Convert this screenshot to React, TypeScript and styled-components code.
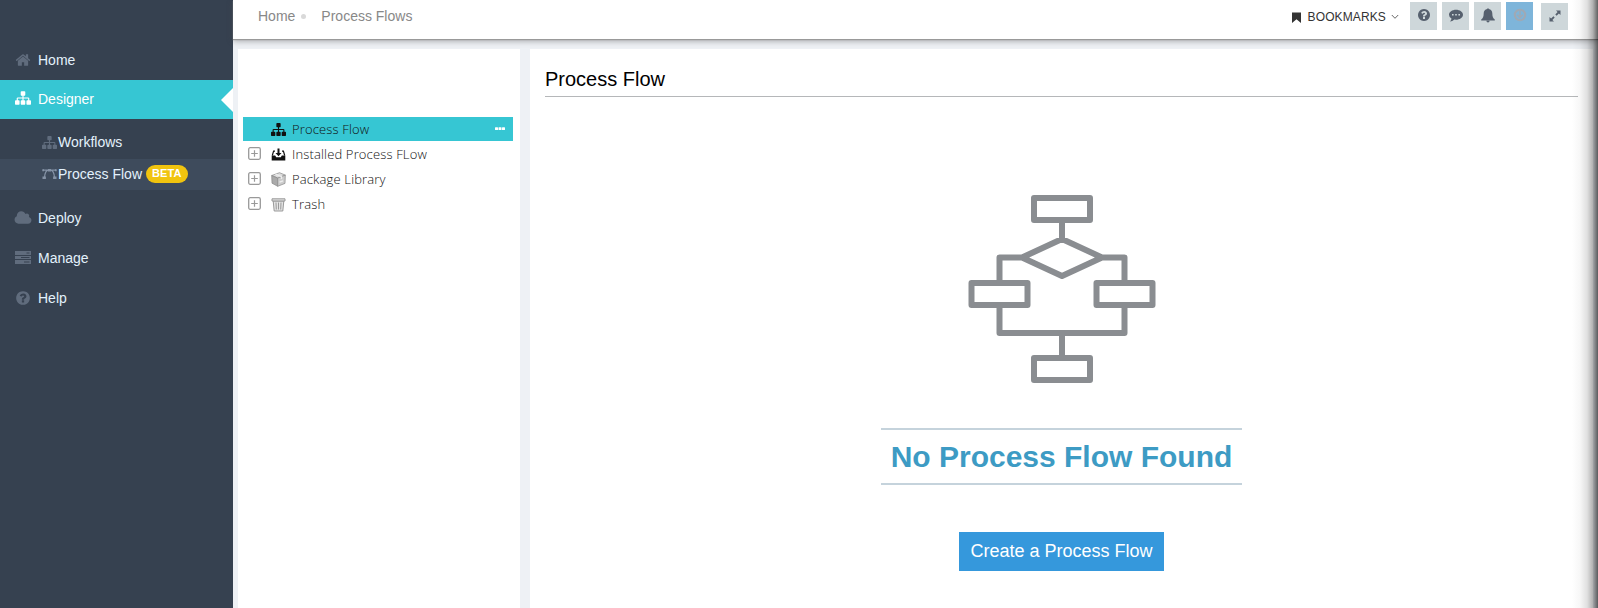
import React from "react";
import styled, { createGlobalStyle } from "styled-components";

const GlobalStyle = createGlobalStyle`
  * { box-sizing: border-box; }
  body {
    margin: 0;
    overflow: hidden;
    background: #eef1f5;
    font-family: "Liberation Sans", Arial, sans-serif;
    font-size: 14px;
  }
`;

const Shell = styled.div`
  position: relative;
  display: flex;
  height: 100vh;
`;

const Sidebar = styled.nav`
  width: 233px;
  flex: none;
  padding-top: 40px;
  background: #364150;
`;

const NavItem = styled.a<{ $active?: boolean }>`
  position: relative;
  display: flex;
  align-items: center;
  gap: 6px;
  height: ${(p) => (p.$active ? 39 : 40)}px;
  padding-left: 14px;
  padding-bottom: ${(p) => (p.$active ? 2 : 0)}px;
  background: ${(p) => (p.$active ? "#36c6d3" : "transparent")};
  color: ${(p) => (p.$active ? "#fff" : "#e3f1fc")};
  svg { color: ${(p) => (p.$active ? "#fff" : "#606c7d")}; }
`;

const ActiveArrow = styled.span`
  position: absolute;
  right: 0;
  top: 8px;
  border: solid transparent;
  border-width: 12px 12px 12px 0;
  border-right-color: #fff;
`;

const IconSlot = styled.span`
  display: flex;
  justify-content: center;
  width: 18px;
  margin-top: -1px;
`;

const SubMenu = styled.div`
  padding: 8px 0;
`;

const SubItem = styled.a<{ $current?: boolean }>`
  display: flex;
  align-items: center;
  height: ${(p) => (p.$current ? 31 : 32)}px;
  padding: 0 0 2px 42px;
  color: #e3f1fc;
  background: ${(p) => (p.$current ? "#3e4b5c" : "transparent")};
  svg {
    margin-right: 1px;
    color: ${(p) => (p.$current ? "#8492a5" : "#606c7d")};
  }
`;

const BetaBadge = styled.span`
  height: 18px;
  margin-left: 4px;
  padding: 0 6px;
  border-radius: 9px;
  background: #f1c40f;
  color: #fff;
  font-size: 11px;
  font-weight: 700;
  letter-spacing: 0.1px;
  line-height: 17px;
`;

const Main = styled.div`
  flex: 1;
  display: flex;
  flex-direction: column;
  min-width: 0;
`;

const Header = styled.header`
  position: relative;
  z-index: 1;
  display: flex;
  justify-content: space-between;
  height: 39px;
  flex: none;
  padding: 0 30px 0 25px;
  background: #fff;
  box-shadow: 0 1px 1px #999, 0 2px 6px rgba(70, 70, 70, 0.45);
`;

const Breadcrumb = styled.div`
  display: flex;
  align-items: center;
  height: 32px;
  color: #888;
`;

const Dot = styled.i`
  width: 5px;
  height: 5px;
  margin: 0 15px 0 6px;
  border-radius: 50%;
  background: #d9d9d9;
`;

const Tools = styled.div`
  display: flex;
  align-items: flex-start;
`;

const Bookmarks = styled.div`
  display: flex;
  align-items: center;
  height: 34px;
  margin-right: 6px;
  color: #333;
  font-size: 12px;
  letter-spacing: 0.12px;
`;

const BookmarkLabel = styled.span`
  margin: 0 5px 0 7px;
`;

const ToolButton = styled.button<{ $tint?: boolean; $last?: boolean }>`
  display: flex;
  align-items: center;
  justify-content: center;
  width: 27px;
  height: ${(p) => (p.$last ? 27 : 28)}px;
  margin: ${(p) => (p.$last ? "3px 0 0 8px" : "2px 0 0 5px")};
  padding: 0 0 2px;
  border: 0;
  background: ${(p) => (p.$tint ? "#7eb5da" : "#ced7da")};
  color: ${(p) => (p.$tint ? "#9fa9b5" : "#56606e")};
`;

const Panels = styled.div`
  flex: 1;
  display: flex;
  gap: 10px;
  padding: 10px 5px 0;
`;

const TreePanel = styled.aside`
  width: 282px;
  padding: 68px 7px 0 5px;
  background: #fff;
`;

const TreeRow = styled.div<{ $selected?: boolean }>`
  display: flex;
  align-items: center;
  height: 24px;
  margin-bottom: 1px;
  padding: 0 8px 0 5px;
  background: ${(p) => (p.$selected ? "#36c6d3" : "transparent")};
  color: #111;
  font-family: "Open Sans", sans-serif;
  font-size: 13px;
  font-weight: 300;
`;

const TreeLabel = styled.span`
  flex: 1;
  margin-left: 6px;
  letter-spacing: 0.15px;
`;

const Expander = styled.span`
  display: flex;
  width: 14px;
  margin-right: 9px;
`;

const Content = styled.main`
  flex: 1;
  padding: 0 15px;
  background: #fff;
`;

const Title = styled.h1`
  height: 48px;
  margin: 0;
  padding-top: 18px;
  border-bottom: 1px solid #b5b7b9;
  color: #000;
  font-size: 20px;
  font-weight: 400;
  line-height: 24px;
`;

const EmptyState = styled.section`
  display: flex;
  flex-direction: column;
  align-items: center;
  padding-top: 98px;
`;

const Message = styled.h2`
  width: 361px;
  height: 57px;
  margin: 45px 0 47px;
  border: solid #c5d3dc;
  border-width: 2px 0;
  color: #3d9bc4;
  font-size: 30px;
  line-height: 53px;
  text-align: center;
  white-space: nowrap;
`;

const CreateButton = styled.button`
  width: 205px;
  height: 39px;
  padding: 0;
  border: 0;
  background: #3598dc;
  color: #fff;
  font: 18px "Liberation Sans", Arial, sans-serif;
`;

const EdgeShadow = styled.div`
  position: absolute;
  z-index: 2;
  top: 0;
  right: 0;
  width: 26px;
  height: 100%;
  pointer-events: none;
  background: linear-gradient(to right, rgba(0,0,0,0), rgba(0,0,0,0.03) 30%, rgba(0,0,0,0.12) 58%, rgba(0,0,0,0.3) 80%, rgba(0,0,0,0.62));
`;

const paths = {
  home: "M1472 992v480q0 26-19 45t-45 19h-384v-384h-256v384h-384q-26 0-45-19t-19-45v-480q0-1 .5-3t.5-3l575-474 575 474q1 2 1 6zm223-69l-62 74q-8 9-21 11h-3q-13 0-21-7l-692-577-692 577q-12 8-24 7-13-2-21-11l-62-74q-8-10-7-23.5t11-21.5l719-599q32-26 76-26t76 26l244 204v-195q0-14 9-23t23-9h192q14 0 23 9t9 23v408l219 182q10 8 11 21.5t-7 23.5z",
  sitemap: "M1792 1248v320q0 40-28 68t-68 28h-320q-40 0-68-28t-28-68v-320q0-40 28-68t68-28h96v-192h-512v192h96q40 0 68 28t28 68v320q0 40-28 68t-68 28h-320q-40 0-68-28t-28-68v-320q0-40 28-68t68-28h96v-192h-512v192h96q40 0 68 28t28 68v320q0 40-28 68t-68 28h-320q-40 0-68-28t-28-68v-320q0-40 28-68t68-28h96v-192q0-52 38-90t90-38h512v-192h-96q-40 0-68-28t-28-68v-320q0-40 28-68t68-28h320q40 0 68 28t28 68v320q0 40-28 68t-68 28h-96v192h512q52 0 90 38t38 90v192h96q40 0 68 28t28 68z",
  question: "M1024 1376v-192q0-14-9-23t-23-9h-192q-14 0-23 9t-9 23v192q0 14 9 23t23 9h192q14 0 23-9t9-23zm256-672q0-88-55.5-163t-138.5-116-170-41q-243 0-371 213-15 24 8 42l132 100q7 6 19 6 16 0 25-12 53-68 86-92 34-24 86-24 48 0 85.5 26t37.5 59q0 38-20 61t-68 45q-63 28-115.5 86.5t-52.5 125.5v36q0 14 9 23t23 9h192q14 0 23-9t9-23q0-19 21.500-49.500t54.500-49.500q32-18 49-28.500t46-35 44.500-48 28-60.500 12.500-81zm384 192q0 209-103 385.500t-279.500 279.500-385.500 103-385.500-103-279.500-279.500-103-385.500 103-385.500 279.500-279.500 385.500-103 385.500 103 279.500 279.500 103 385.500z",
  cloud: "M1984 1152q0 159-112.5 271.5t-271.5 112.5h-1088q-185 0-316.5-131.5t-131.5-316.5q0-132 71-241.5t187-163.5q-2-28-2-43 0-212 150-362t362-150q158 0 286.5 88t187.5 230q70-62 166-62 106 0 181 75t75 181q0 75-41 138 129 30 213 134.5t84 239.5z",
};

const Glyph = ({ name, size = 16 }: { name: keyof typeof paths; size?: number }) => {
  const w = name === "cloud" ? 2048 : 1792;
  return (
    <svg width={(size * w) / 1792} height={size} viewBox={`0 0 ${w} 1792`} fill="currentColor">
      <path d={paths[name]} />
    </svg>
  );
};

const ServerIcon = () => (
  <svg width="16" height="14" viewBox="0 0 16 14">
    <path fill="currentColor" d="M0 0h16v4H0zM0 5h16v3H0zM0 9h16v4H0z" />
    <path stroke="#364150" strokeWidth="1" d="M11.500 2h3M6 6.500h8.500M9 11h5.500" />
  </svg>
);

const CurveIcon = () => (
  <svg width="15" height="12" viewBox="0 0 15 12" fill="none" stroke="currentColor">
    <path d="M2.500 9.500Q3 3 6 2.200H9Q12 3 12.500 9.500M1 2.200h13" strokeWidth="1.300" />
    <path d="M6 1h3v2.400H6zM.5 8.500h3.400v2.500H.5zM11.100 8.500h3.400v2.500h-3.400zM.3 1.200h1.700v2H.3zM13 1.200h1.700v2H13z" fill="currentColor" stroke="none" />
  </svg>
);

const BookmarkIcon = () => (
  <svg width="9" height="11" viewBox="0 0 9 11"><path fill="#333" d="M0 .5h9V11L4.500 7.200 0 11z" /></svg>
);

const Chevron = () => (
  <svg width="8" height="6" viewBox="0 0 8 6" fill="none" stroke="#666"><path d="M.8 1l3.200 3.300L7.200 1" /></svg>
);

const CommentIcon = () => (
  <svg width="14" height="13" viewBox="0 0 14 13">
    <path fill="currentColor" d="M7 .7c3.800 0 7 2.200 7 5s-3.200 5-7 5q-.8 0-1.600-.1Q3.400 12.400.9 12.500q1.600-1.300 1.600-2.900Q0 8.200 0 5.700c0-2.800 3.200-5 7-5z" />
    <path fill="#ced7da" d="M3 5h1.600v1.600H3zM6.200 5h1.600v1.600H6.200zM9.400 5H11v1.600H9.400z" />
  </svg>
);

const BellIcon = () => (
  <svg width="14" height="15" viewBox="0 0 14 15">
    <path fill="currentColor" d="M6.200 1a.8.8 0 0 1 1.600 0C10 1.500 11.300 3.200 11.300 5.200c0 3.300.8 5 2.500 6.300v.9H.2v-.9C1.900 10.200 2.700 8.500 2.700 5.200c0-2 1.300-3.700 3.500-4.200zM5.400 12.800h3.200a1.600 1.600 0 0 1-3.200 0z" />
  </svg>
);

const DownIcon = () => (
  <svg width="14" height="14" viewBox="0 0 14 14" fill="none" stroke="currentColor">
    <circle cx="7" cy="7" r="5.200" strokeWidth="2.100" />
    <path d="M7 3v6.500M4.200 6.800L7 9.600l2.800-2.800" strokeWidth="1.500" />
  </svg>
);

const ExpandIcon = () => (
  <svg width="12" height="12" viewBox="0 0 12 12">
    <path fill="currentColor" d="M7 .5h4.500V5L9.900 3.400 7.600 5.700l-1.300-1.300 2.300-2.300zM5 11.500H.5V7l1.600 1.600 2.300-2.300 1.300 1.300-2.300 2.300z" />
  </svg>
);

const PlusBox = () => (
  <svg width="14" height="14" viewBox="0 0 14 14" fill="none" stroke="#999">
    <rect x=".7" y=".7" width="11.600" height="11.600" rx="1.500" strokeWidth="1.300" />
    <path d="M6.500 3.200v6.600M3.200 6.500h6.600" strokeWidth="1.200" />
  </svg>
);

const InstallIcon = () => (
  <svg width="15" height="14" viewBox="0 0 15 14">
    <path fill="#111" d="M6.500 1.500h2v4.500h2L7.500 9.300 4.500 6h2z" />
    <path fill="none" stroke="#111" strokeWidth="1.200" d="M4 4.200H2.600L1.300 8.500M11 4.200h1.400l1.300 4.300" />
    <path fill="#111" d="M.7 8.500h3.500l1 1.700h4.600l1-1.700h3.500v5H.7z" />
  </svg>
);

const PackageIcon = () => (
  <svg width="15" height="15" viewBox="0 0 15 15" stroke="#888" strokeWidth=".7">
    <path fill="#ddd" d="M.7 3.500L8.500.7l5.800 2.400-7.600 3z" />
    <path fill="#aaa" d="M.7 3.500l6 2.600v8.200L1 11.200z" />
    <path fill="#ccc" d="M6.700 6.100l7.600-3-.3 8.300-7.300 2.900z" />
    <path fill="none" stroke="#eee" d="M4.500 2.200l6 2.400v2.500M8.500 10.200l3.500-1.400" strokeWidth="1.300" />
  </svg>
);

const TrashIcon = () => (
  <svg width="15" height="15" viewBox="0 0 15 15" fill="none" stroke="#999">
    <path fill="#e4e4e4" d="M2.200 4h10.600l-1 10H3.200z" />
    <path fill="#ddd" d="M1 1.800h13V4H1z" />
    <path d="M5 5.500l.3 7M7.500 5.500v7M10 5.500l-.3 7" />
  </svg>
);

const MoreIcon = () => (
  <svg width="10" height="4" viewBox="0 0 10 4" fill="#fff">
    <rect y=".2" width="3" height="2.800" rx=".5" />
    <rect x="3.500" y=".2" width="3" height="2.800" rx=".5" />
    <rect x="7" y=".2" width="3" height="2.800" rx=".5" />
  </svg>
);

const FlowDiagram = () => (
  <svg width="188" height="188" viewBox="0 0 188 188" fill="none" stroke="#8a8d91" strokeWidth="6" strokeLinejoin="round">
    <rect x="66" y="3" width="56" height="22" />
    <rect x="3.500" y="88" width="56" height="22" />
    <rect x="128.500" y="88" width="56" height="22" />
    <rect x="66" y="163" width="56" height="22" />
    <path d="M94 25v19M94 44l40 18.500-40 18.500-40-18.500zM54 62.500H31.500v25M134 62.500h22.500v25M31.500 110v28h125v-28M94 138v25" />
  </svg>
);

const treeItems = [
  { label: "Installed Process FLow", icon: <InstallIcon /> },
  { label: "Package Library", icon: <PackageIcon /> },
  { label: "Trash", icon: <TrashIcon /> },
];

export default function App() {
  return (
    <Shell>
      <GlobalStyle />
      <Sidebar>
        <NavItem><IconSlot><Glyph name="home" /></IconSlot>Home</NavItem>
        <NavItem $active>
          <IconSlot><Glyph name="sitemap" /></IconSlot>Designer<ActiveArrow />
        </NavItem>
        <SubMenu>
          <SubItem><Glyph name="sitemap" size={15} />Workflows</SubItem>
          <SubItem $current><CurveIcon />Process Flow<BetaBadge>BETA</BetaBadge></SubItem>
        </SubMenu>
        <NavItem><IconSlot><Glyph name="cloud" /></IconSlot>Deploy</NavItem>
        <NavItem><IconSlot><ServerIcon /></IconSlot>Manage</NavItem>
        <NavItem><IconSlot><Glyph name="question" /></IconSlot>Help</NavItem>
      </Sidebar>
      <Main>
        <Header>
          <Breadcrumb>Home<Dot />Process Flows</Breadcrumb>
          <Tools>
            <Bookmarks><BookmarkIcon /><BookmarkLabel>BOOKMARKS</BookmarkLabel><Chevron /></Bookmarks>
            <ToolButton><Glyph name="question" size={14} /></ToolButton>
            <ToolButton><CommentIcon /></ToolButton>
            <ToolButton><BellIcon /></ToolButton>
            <ToolButton $tint><DownIcon /></ToolButton>
            <ToolButton $last><ExpandIcon /></ToolButton>
          </Tools>
        </Header>
        <Panels>
          <TreePanel>
            <TreeRow $selected>
              <Expander />
              <Glyph name="sitemap" size={15} />
              <TreeLabel>Process Flow</TreeLabel>
              <MoreIcon />
            </TreeRow>
            {treeItems.map((t) => (
              <TreeRow key={t.label}>
                <Expander><PlusBox /></Expander>
                {t.icon}
                <TreeLabel>{t.label}</TreeLabel>
              </TreeRow>
            ))}
          </TreePanel>
          <Content>
            <Title>Process Flow</Title>
            <EmptyState>
              <FlowDiagram />
              <Message>No Process Flow Found</Message>
              <CreateButton>Create a Process Flow</CreateButton>
            </EmptyState>
          </Content>
        </Panels>
      </Main>
      <EdgeShadow />
    </Shell>
  );
}
